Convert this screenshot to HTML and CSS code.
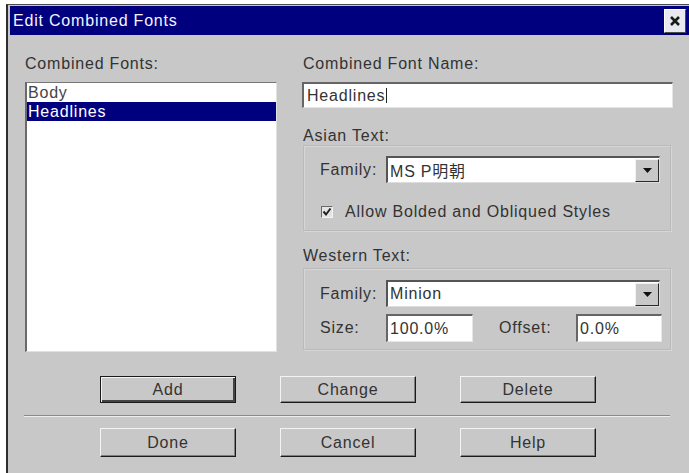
FILE: index.html
```html
<!DOCTYPE html>
<html lang="en">
<head>
<meta charset="utf-8">
<title>Edit Combined Fonts</title>
<link rel="stylesheet" href="styles.css">
</head>
<body>
<div class="dialog">
  <div class="titlebar">
    <span class="title">Edit Combined Fonts</span>
    <span class="close">
      <svg width="12" height="12" viewBox="0 0 12 12"><path d="M2 2L10 10M10 2L2 10" stroke="#1a1a1a" stroke-width="2.6" fill="none"/></svg>
    </span>
  </div>

  <div class="content">
    <div class="top">
      <div class="col-left">
        <div class="label list-label">Combined Fonts:</div>
        <div class="listbox">
          <div class="item">Body</div>
          <div class="item selected">Headlines</div>
        </div>
      </div>

      <div class="col-right">
        <div class="label name-label">Combined Font Name:</div>
        <div class="field name-field">Headlines<span class="caret"></span></div>

        <div class="label section-label asian-label">Asian Text:</div>
        <div class="group asian">
          <div class="row">
            <span class="row-label">Family:</span>
            <div class="select">
              <span class="value cjk">MS P明朝</span>
              <span class="drop"><svg width="9" height="5" viewBox="0 0 9 5"><path d="M0 0H9L4.5 5Z" fill="#111"/></svg></span>
            </div>
          </div>
          <div class="check-row">
            <span class="checkbox"><svg width="10" height="10" viewBox="0 0 10 10"><path d="M1.5 4.5L4 7.5L8.5 1.5" stroke="#222" stroke-width="2" fill="none"/></svg></span>
            <span>Allow Bolded and Obliqued Styles</span>
          </div>
        </div>

        <div class="label section-label western-label">Western Text:</div>
        <div class="group western">
          <div class="row">
            <span class="row-label">Family:</span>
            <div class="select">
              <span class="value">Minion</span>
              <span class="drop"><svg width="9" height="5" viewBox="0 0 9 5"><path d="M0 0H9L4.5 5Z" fill="#111"/></svg></span>
            </div>
          </div>
          <div class="row size-row">
            <span class="row-label">Size:</span>
            <div class="field small">100.0%</div>
            <span class="offset-label">Offset:</span>
            <div class="field small offset">0.0%</div>
          </div>
        </div>
      </div>
    </div>

    <div class="buttons first">
      <div class="btn default">Add</div>
      <div class="btn">Change</div>
      <div class="btn">Delete</div>
    </div>
    <div class="separator"></div>
    <div class="buttons second">
      <div class="btn tall">Done</div>
      <div class="btn tall">Cancel</div>
      <div class="btn tall">Help</div>
    </div>
  </div>
</div>
</body>
</html>
```

FILE: styles.css
```css
html, body {
  margin: 0;
  padding: 0;
  width: 689px;
  height: 473px;
  overflow: hidden;
  background: #ffffff;
}

body {
  font-family: "Liberation Sans", Arial, sans-serif;
  font-size: 16px;
  letter-spacing: 0.8px;
  color: #333333;
}

.cjk {
  font-family: "Liberation Sans", "Noto Sans CJK JP", sans-serif;
}

/* window frame */
.dialog {
  margin: 4px 0 0 6px;
  height: 468px;
  background: #c8c8c8;
  border-top: 1px solid #4a4a4a;
  border-left: 2px solid #2e2e2e;
}

.titlebar {
  margin: 1px 0 0 2px;
  height: 29px;
  padding-left: 3px;
  background: #00007f;
  color: #f4f4ff;
  display: flex;
  align-items: center;
  justify-content: space-between;
}

.title {
  white-space: nowrap;
}

.close {
  width: 22px;
  height: 24px;
  margin-right: 3px;
  box-sizing: border-box;
  background: #e8e8f0;
  border: 1px solid;
  border-color: #ffffff #4a4a4a #4a4a4a #ffffff;
  display: flex;
  align-items: center;
  justify-content: center;
}

/* dialog body */
.content {
  padding: 19px 0 0 17px;
}

.top {
  display: flex;
  gap: 25px;
}

.label {
  height: 19px;
  line-height: 19px;
  white-space: nowrap;
}

.col-left {
  width: 252px;
}

.list-label {
  margin-bottom: 9px;
}

.listbox {
  height: 270px;
  box-sizing: border-box;
  background: #ffffff;
  border-style: solid;
  border-width: 1px 1px 1px 2px;
  border-color: #777777 #e2e2e2 #e2e2e2 #6a6a6a;
}

.item {
  height: 19px;
  line-height: 19px;
  padding-left: 1px;
  color: #444444;
}

.item.selected {
  background: #00007f;
  color: #ffffff;
}

.col-right {
  width: 371px;
}

.name-label {
  margin-bottom: 9px;
  padding-left: 1px;
}

.field {
  background: #ffffff;
  box-sizing: border-box;
  border-style: solid;
  border-width: 2px 1px 1px 2px;
  border-color: #666666 #e6e6e6 #e6e6e6 #666666;
  display: flex;
  align-items: center;
  white-space: nowrap;
}

.name-field {
  height: 26px;
  padding-left: 3px;
}

.caret {
  display: inline-block;
  width: 1px;
  height: 15px;
  margin-left: 1px;
  background: #222222;
}

.section-label {
  padding-left: 1px;
}

.asian-label {
  margin-top: 18px;
}

.western-label {
  margin-top: 15px;
  margin-bottom: 3px;
}

/* etched group boxes */
.group {
  width: 368px;
  margin-left: 1px;
  box-sizing: border-box;
  padding-left: 16px;
  border: 1px solid #bababa;
  box-shadow: inset 1px 1px 0 #d6d6d6, 1px 1px 0 #d6d6d6;
}

.asian {
  padding-top: 10px;
  padding-bottom: 9px;
}

.western {
  padding-top: 11px;
  padding-bottom: 7px;
}

.row {
  display: flex;
  align-items: center;
}

.row-label {
  width: 66px;
  white-space: nowrap;
}

.select {
  width: 274px;
  height: 27px;
  box-sizing: border-box;
  background: #ffffff;
  border-style: solid;
  border-width: 2px 1px 1px 2px;
  border-color: #555555 #dddddd #dddddd #555555;
  display: flex;
  align-items: center;
  justify-content: space-between;
}

.select .value {
  padding-left: 2px;
  white-space: nowrap;
}

.drop {
  width: 24px;
  height: 23px;
  box-sizing: border-box;
  background: #c8c8c8;
  border: 1px solid;
  border-color: #f2f2f2 #2a2a2a #2a2a2a #f2f2f2;
  display: flex;
  align-items: center;
  justify-content: center;
}

.check-row {
  margin-top: 19px;
  height: 19px;
  display: flex;
  align-items: center;
}

.checkbox {
  width: 12px;
  height: 12px;
  margin-left: 1px;
  margin-right: 12px;
  box-sizing: border-box;
  background: #e4e4e4;
  border: 1px solid;
  border-color: #6a6a6a #f4f4f4 #f4f4f4 #6a6a6a;
  display: flex;
  align-items: center;
  justify-content: center;
}

.size-row {
  margin-top: 7px;
}

.small {
  width: 87px;
  height: 28px;
  padding-left: 2px;
}

.offset-label {
  width: 77px;
  margin-left: 26px;
  white-space: nowrap;
}

.small.offset {
  width: 86px;
}

/* push buttons */
.buttons {
  display: flex;
  gap: 44px;
  padding-left: 75px;
}

.buttons.first {
  margin-top: 24px;
}

.buttons.second {
  margin-top: 11px;
}

.btn {
  width: 136px;
  height: 27px;
  box-sizing: border-box;
  background: #c8c8c8;
  border: 1px solid;
  border-color: #f4f4f4 #1a1a1a #1a1a1a #f4f4f4;
  box-shadow: inset -1px -1px 0 #7e7e7e;
  display: flex;
  align-items: center;
  justify-content: center;
  color: #333333;
}

.btn.tall {
  height: 29px;
}

.btn.default {
  border-color: #1a1a1a;
  box-shadow: inset 1px 1px 0 #f4f4f4, inset -2px -2px 0 #444444;
}

.separator {
  width: 646px;
  height: 2px;
  margin: 12px 0 0 -1px;
  box-sizing: border-box;
  border-top: 1px solid #8a8a8a;
  border-bottom: 1px solid #eeeeee;
}
```
